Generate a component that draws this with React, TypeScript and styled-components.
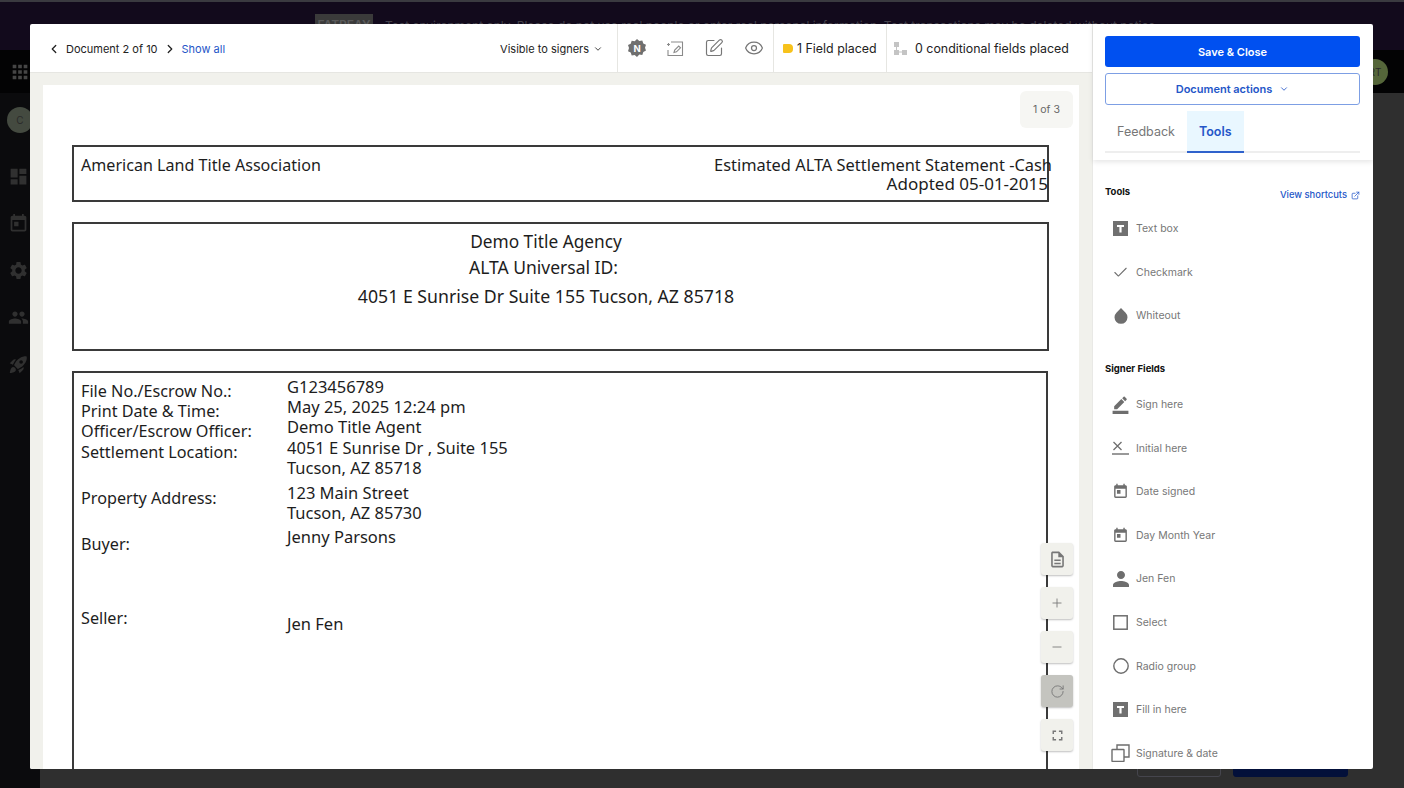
import React from "react";
import styled, { createGlobalStyle } from "styled-components";
import { ChevronLeft, ChevronRight, ChevronDown, Check, Eye, SquarePen, Plus, Minus, RotateCw, ExternalLink } from "lucide-react";
import { MdDashboard, MdToday, MdSettings, MdPeople, MdRocketLaunch, MdBorderColor, MdPerson, MdApps, MdOutlineDescription, MdFullscreen } from "react-icons/md";

const Global = createGlobalStyle`
  html, body { margin: 0; padding: 0; height: 100%; background: #2f2f2f; overflow: hidden; }
  * { box-sizing: border-box; }
  #root { height: 100%; font-family: Inter, "Liberation Sans", sans-serif; }
`;

const Shell = styled.div`
  position: relative; width: 1404px; height: 788px; display: flex; flex-direction: column; overflow: hidden;
`;
const TopBar = styled.div`
  height: 50px; flex: none; background: #120a1c; border-top: 2px solid #3a3a40; display: flex; align-items: flex-start; gap: 12px; padding: 12px 0 0 315px;
`;
const EnvChip = styled.div`
  width: 58px; height: 24px; background: #3a3a3a; color: #5a5a5a; font-size: 12px; font-weight: 600; text-align: center; line-height: 22px;
`;
const EnvText = styled.div`
  color: #45424c; font-size: 12px; line-height: 24px; white-space: nowrap;
`;
const NavBar = styled.div`
  height: 43px; flex: none; background: #030304; display: flex; align-items: center; justify-content: space-between; padding: 0 16px 0 9px; color: #454545;
`;
const Avatar = styled.div<{ $bg: string }>`
  width: 26px; height: 26px; border-radius: 50%; background: ${(p) => p.$bg}; color: #2a2a2a; font-size: 10px; display: flex; align-items: center; justify-content: center; flex: none;
`;
const Body = styled.div`
  flex: 1; display: flex; min-height: 0; background: #2f2f2f;
`;
const Side = styled.div`
  width: 40px; flex: none; background: #0b0b0d; color: #303030; display: flex; flex-direction: column; align-items: flex-start; padding: 14px 0 0 7px;
`;
const SideGroup = styled.div`
  display: flex; flex-direction: column; gap: 26px; margin-top: 33px; padding-left: 1px;
`;
const GhostRow = styled.div`
  flex: 1; display: flex; justify-content: flex-end; align-items: flex-end; gap: 12px; padding: 0 56px 11px 0;
`;
const GhostBtn = styled.div<{ $w: number; $bg: string; $line: string }>`
  width: ${(p) => p.$w}px; height: 30px; background: ${(p) => p.$bg}; border: 1px solid ${(p) => p.$line}; border-radius: 3px;
`;

const Modal = styled.div`
  position: absolute; left: 30px; top: 24px; width: 1343px; height: 745px; background: #fff; display: flex; overflow: hidden; border-radius: 2px;
`;
const Left = styled.div`
  flex: 1; min-width: 0; display: flex; flex-direction: column;
`;
const Header = styled.div`
  height: 49px; flex: none; display: flex; align-items: stretch; border-bottom: 1px solid #e6e6e2; color: #222; font-size: 11px; box-shadow: 0 1px 2px rgba(0,0,0,.05); padding-top: 1px;
`;
const Crumbs = styled.div`
  flex: 1; display: flex; align-items: center; padding-left: 17px;
`;
const DocLabel = styled.span`
  margin: 0 5px;
`;
const ShowAll = styled.span`
  color: #2456c8; margin-left: 5px;
`;
const Visible = styled.div`
  margin-left: auto; display: flex; align-items: center; gap: 4px; padding-right: 14px; font-size: 11px;
`;
const HeadCell = styled.div<{ $w: number; $gap?: number; $pad?: number }>`
  width: ${(p) => p.$w}px; flex: none; border-left: 1px solid #e6e6e2; margin-top: -1px; display: flex; align-items: center; gap: ${(p) => p.$gap ?? 0}px; padding-left: ${(p) => p.$pad ?? 0}px; font-size: 12.4px; white-space: nowrap;
`;
const HeadIcons = styled(HeadCell)`
  justify-content: space-between; padding: 0 9px 0 10px; color: #777;
`;
const Tag = styled.span`
  width: 10px; height: 9px; background: #f7c21b; border-radius: 1px 4px 4px 1px; display: block;
`;
const Work = styled.div`
  flex: 1; min-height: 0; background: #f1f1ec; padding: 12px 13px 0; display: flex;
`;
const Page = styled.div`
  position: relative; flex: 1; background: #fff; padding: 60px 0 0 29px; overflow: hidden; display: flex; flex-direction: column; gap: 20px; color: #1d1d1d; font-family: "Noto Sans", sans-serif; font-size: 16.5px;
`;
const PageChip = styled.div`
  position: absolute; right: 6px; top: 6px; width: 53px; height: 37px; background: #f6f6f3; border-radius: 6px; color: #666; font-family: Inter, sans-serif; font-size: 10.5px; display: flex; align-items: center; justify-content: center;
`;
const Box = styled.div<{ $h: number }>`
  width: 977px; height: ${(p) => p.$h}px; border: 2px solid #3a3a3a; flex: none;
`;
const TitleBox = styled(Box)`
  display: flex; justify-content: space-between; padding: 7px 0 0 7px;
`;
const LeftTitle = styled.div`
  font-size: 16.1px;
`;
const RightTitle = styled.div`
  text-align: right; line-height: 19px; margin: 1px -5px 0 0; white-space: nowrap; font-size: 16.4px;
`;
const Adopted = styled.div`
  margin-right: 4px; font-size: 17px;
`;
const AgencyBox = styled(Box)`
  display: flex; flex-direction: column; align-items: center; padding: 6px 29px 0 0;
`;
const AgencyLine = styled.div<{ $h: number; $size: number; $nudge?: number }>`
  height: ${(p) => p.$h}px; line-height: 24px; font-size: ${(p) => p.$size}px; margin-right: ${(p) => p.$nudge ?? 0}px;
`;
const InfoBox = styled.div`
  width: 976px; height: 500px; flex: none; border: 2px solid #3a3a3a; display: grid; grid-template-columns: 206px 1fr; padding: 4px 0 0 7px;
`;
const Col = styled.div`
  display: flex; flex-direction: column;
`;
const LabelCol = styled(Col)`
  font-size: 16.2px;
`;
const Line = styled.div<{ $top?: number }>`
  line-height: 20.2px; margin-top: ${(p) => p.$top ?? 0}px; white-space: nowrap;
`;
const FloatStack = styled.div`
  position: absolute; right: 6px; top: 458px; display: flex; flex-direction: column; gap: 12px;
`;
const FloatBtn = styled.div<{ $active?: boolean }>`
  width: 32px; height: 32px; border-radius: 3px; background: ${(p) => (p.$active ? "#c4c4bf" : "#f1f1ec")}; box-shadow: 0 1px 2px rgba(0,0,0,.25); display: flex; align-items: center; justify-content: center; color: #777;
`;

const Panel = styled.div`
  width: 281px; flex: none; border-left: 1px solid #e9e9e6; display: flex; flex-direction: column; min-height: 0;
`;
const PanelTop = styled.div`
  height: 136px; flex: none; padding: 12px 13px 0 12px; box-shadow: 0 2px 5px rgba(0,0,0,.1); display: flex; flex-direction: column;
`;
const Primary = styled.div`
  height: 31px; flex: none; background: #0050f0; color: #fff; border-radius: 3px; font-size: 11px; font-weight: 600; display: flex; align-items: center; justify-content: center;
`;
const Secondary = styled.div`
  height: 32px; flex: none; margin-top: 6px; border: 1px solid #7d9fe4; border-radius: 3px; color: #2456c8; font-size: 11px; font-weight: 600; display: flex; align-items: center; justify-content: center; gap: 7px;
`;
const Tabs = styled.div`
  display: flex; height: 42px; flex: none; margin-top: 6px; border-bottom: 2px solid #eeeeee;
`;
const Tab = styled.div<{ $active?: boolean }>`
  padding: 0 12px; height: 42px; display: flex; align-items: center; font-size: 12.5px; font-weight: ${(p) => (p.$active ? 600 : 400)};
  color: ${(p) => (p.$active ? "#2456c8" : "#777")}; background: ${(p) => (p.$active ? "#e9f7ff" : "transparent")}; border-bottom: 2px solid ${(p) => (p.$active ? "#2f62cc" : "transparent")};
`;
const ToolList = styled.div`
  flex: 1; min-height: 0; overflow: hidden; padding: 0 13px 0 12px; display: flex; flex-direction: column;
`;
const SectionHead = styled.div<{ $top: number; $after: number }>`
  display: flex; justify-content: space-between; align-items: flex-start; margin-top: ${(p) => p.$top}px; margin-bottom: ${(p) => p.$after}px; height: 16px; font-size: 9.5px; font-weight: 700; color: #111; line-height: 14px;
`;
const Shortcuts = styled.span`
  color: #2456c8; font-weight: 500; font-size: 9.4px; display: flex; align-items: center; gap: 4px; margin-top: 3px;
`;
const Row = styled.div`
  height: 43.6px; flex: none; display: flex; align-items: center; font-size: 10.5px; color: #777;
`;
const RowIcon = styled.div`
  width: 31px; flex: none; display: flex; justify-content: center; color: #6e6e6e;
`;

const TextIcon = () => (
  <svg width="15" height="15" viewBox="0 0 15 15"><rect width="15" height="15" fill="#707070" /><path d="M4 4h7v2H8.600v5.500H6.400V6H4z" fill="#fff" /></svg>
);
const DropIcon = () => (
  <svg width="14" height="16" viewBox="0 0 14 16"><path d="M7 0l4.600 4.700a6.500 6.500 0 1 1-9.200 0z" fill="#6e6e6e" /></svg>
);
const InitialIcon = () => (
  <svg width="17" height="14" viewBox="0 0 17 14" fill="none" stroke="#6e6e6e"><path d="M1.500 1l8 8M9.500 1l-8 8" strokeWidth="1.3" /><path d="M0 13h17" strokeWidth="1.4" /></svg>
);
const SelectIcon = () => (
  <svg width="15" height="15" viewBox="0 0 15 15" fill="none"><rect x=".8" y=".8" width="13.4" height="13.4" stroke="#6e6e6e" strokeWidth="1.5" /></svg>
);
const RadioIcon = () => (
  <svg width="16" height="16" viewBox="0 0 16 16" fill="none"><circle cx="8" cy="8" r="7.200" stroke="#6e6e6e" strokeWidth="1.4" /></svg>
);
const CopyIcon = () => (
  <svg width="19" height="18" viewBox="0 0 19 18" fill="none" stroke="#6e6e6e" strokeWidth="1.4"><rect x="1" y="5.500" width="12" height="12" rx=".5" /><path d="M6 5.500V1h12v12h-5" /></svg>
);
const NBadge = () => (
  <svg width="18" height="18" viewBox="0 0 18 18">
    <path d="M9 0l2.300 2 3-.5 1 2.900 2.700 1.400-1 2.900 1 2.900-2.700 1.400-1 2.900-3-.5L9 18l-2.300-2-3 .5-1-2.900L0 12.200l1-3.200-1-2.900 2.700-1.400 1-2.900 3 .5z" fill="#6f6f6f" />
    <text x="9" y="12.500" textAnchor="middle" fontSize="9.500" fontWeight="700" fill="#fff" fontFamily="Inter, sans-serif">N</text>
  </svg>
);
const SignDoc = () => (
  <svg width="18" height="18" viewBox="0 0 18 18" fill="none" stroke="#8a8a8a" strokeWidth="1.1">
    <path d="M5 3h11.500v13.500H2V11" />
    <path d="M2.500 4v3M1 5.500h3" />
    <path d="M8 13.500l.7-2.500 4-4 1.800 1.800-4 4z" />
  </svg>
);
const TreeIcon = () => (
  <svg width="13" height="13" viewBox="0 0 13 13" fill="#c4c4c4"><rect width="5" height="5" /><rect x="0" y="8" width="5" height="5" /><rect x="8" y="8" width="5" height="5" /><path d="M2 5h1v3H2zM5 9.500h3v1H5z" /></svg>
);

const tools: [string, React.ReactNode][] = [
  ["Text box", <TextIcon />],
  ["Checkmark", <Check size={17} strokeWidth={1.5} />],
  ["Whiteout", <DropIcon />],
];
const fields: [string, React.ReactNode][] = [
  ["Sign here", <MdBorderColor size={19} />],
  ["Initial here", <InitialIcon />],
  ["Date signed", <MdToday size={17} />],
  ["Day Month Year", <MdToday size={17} />],
  ["Jen Fen", <MdPerson size={24} />],
  ["Select", <SelectIcon />],
  ["Radio group", <RadioIcon />],
  ["Fill in here", <TextIcon />],
  ["Signature & date", <CopyIcon />],
];

export default function App() {
  return (
    <Shell>
      <Global />
      <TopBar>
        <EnvChip>FATPEAY</EnvChip>
        <EnvText>Test environment only. Please do not use real people or enter real personal information. Test transactions may be deleted without notice.</EnvText>
      </TopBar>
      <NavBar>
        <MdApps size={22} />
        <Avatar $bg="#55663a">RT</Avatar>
      </NavBar>
      <Body>
        <Side>
          <Avatar $bg="#444a40">C</Avatar>
          <SideGroup>
            <MdDashboard size={21} />
            <MdToday size={21} />
            <MdSettings size={21} />
            <MdPeople size={21} />
            <MdRocketLaunch size={21} />
          </SideGroup>
        </Side>
        <GhostRow>
          <GhostBtn $w={84} $bg="transparent" $line="#45454d" />
          <GhostBtn $w={115} $bg="#03103a" $line="#03103a" />
        </GhostRow>
      </Body>
      <Modal>
        <Left>
          <Header>
            <Crumbs>
              <ChevronLeft size={14} strokeWidth={2.2} />
              <DocLabel>Document 2 of 10</DocLabel>
              <ChevronRight size={14} strokeWidth={2.2} />
              <ShowAll>Show all</ShowAll>
              <Visible>
                Visible to signers
                <ChevronDown size={10} strokeWidth={2} />
              </Visible>
            </Crumbs>
            <HeadIcons $w={156}>
              <NBadge />
              <SignDoc />
              <SquarePen size={20} strokeWidth={1.4} />
              <Eye size={20} strokeWidth={1.5} />
            </HeadIcons>
            <HeadCell $w={113} $gap={4} $pad={9}><Tag />1 Field placed</HeadCell>
            <HeadCell $w={206} $gap={8} $pad={7}><TreeIcon />0 conditional fields placed</HeadCell>
          </Header>
          <Work>
            <Page>
              <PageChip>1 of 3</PageChip>
              <TitleBox $h={57}>
                <LeftTitle>American Land Title Association</LeftTitle>
                <RightTitle>
                  Estimated ALTA Settlement Statement -Cash
                  <Adopted>Adopted 05-01-2015</Adopted>
                </RightTitle>
              </TitleBox>
              <AgencyBox $h={129}>
                <AgencyLine $h={25} $size={17.3}>Demo Title Agency</AgencyLine>
                <AgencyLine $h={29} $size={17.5} $nudge={5}>ALTA Universal ID:</AgencyLine>
                <AgencyLine $h={24} $size={17.7}>4051 E Sunrise Dr Suite 155 Tucson, AZ 85718</AgencyLine>
              </AgencyBox>
              <InfoBox>
                <LabelCol>
                  <Line $top={4}>File No./Escrow No.:</Line>
                  <Line>Print Date &amp; Time:</Line>
                  <Line>Officer/Escrow Officer:</Line>
                  <Line>Settlement Location:</Line>
                  <Line $top={26}>Property Address:</Line>
                  <Line $top={26}>Buyer:</Line>
                  <Line $top={54}>Seller:</Line>
                </LabelCol>
                <Col>
                  <Line>G123456789</Line>
                  <Line>May 25, 2025 12:24 pm</Line>
                  <Line>Demo Title Agent</Line>
                  <Line>4051 E Sunrise Dr , Suite 155</Line>
                  <Line>Tucson, AZ 85718</Line>
                  <Line $top={5}>123 Main Street</Line>
                  <Line>Tucson, AZ 85730</Line>
                  <Line $top={4}>Jenny Parsons</Line>
                  <Line $top={66}>Jen Fen</Line>
                </Col>
              </InfoBox>
              <FloatStack>
                <FloatBtn><MdOutlineDescription size={19} /></FloatBtn>
                <FloatBtn><Plus size={14} strokeWidth={1.5} /></FloatBtn>
                <FloatBtn><Minus size={14} strokeWidth={1.5} /></FloatBtn>
                <FloatBtn $active><RotateCw size={15} strokeWidth={1.5} /></FloatBtn>
                <FloatBtn><MdFullscreen size={17} /></FloatBtn>
              </FloatStack>
            </Page>
          </Work>
        </Left>
        <Panel>
          <PanelTop>
            <Primary>Save &amp; Close</Primary>
            <Secondary>Document actions <ChevronDown size={10} strokeWidth={2} /></Secondary>
            <Tabs>
              <Tab>Feedback</Tab>
              <Tab $active>Tools</Tab>
            </Tabs>
          </PanelTop>
          <ToolList>
            <SectionHead $top={25} $after={6}>
              Tools
              <Shortcuts>View shortcuts <ExternalLink size={9} /></Shortcuts>
            </SectionHead>
            {tools.map(([t, i]) => (
              <Row key={t}><RowIcon>{i}</RowIcon>{t}</Row>
            ))}
            <SectionHead $top={24} $after={7}>Signer Fields</SectionHead>
            {fields.map(([t, i]) => (
              <Row key={t}><RowIcon>{i}</RowIcon>{t}</Row>
            ))}
          </ToolList>
        </Panel>
      </Modal>
    </Shell>
  );
}
